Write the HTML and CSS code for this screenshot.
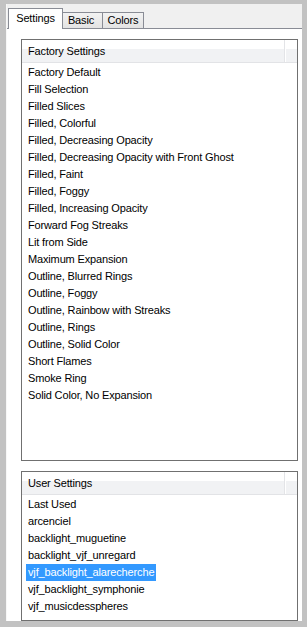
FILE: index.html
```html
<!DOCTYPE html>
<html lang="en">

<head>
    <meta charset="UTF-8">
    <title>Glow Settings</title>
    <link rel="stylesheet" href="styles.css">
</head>

<body>
    <div class="window">
        <!-- Tabs -->
        <div class="tabs">
            <div class="tab active">Settings</div>
            <div class="tab basic">Basic</div>
            <div class="tab colors">Colors</div>
        </div>

        <div class="panel">
            <!-- Factory presets -->
            <div class="listbox factory">
                <div class="list_head">
                    <span class="col">Factory Settings</span>
                    <span class="col_rest"></span>
                </div>
                <div class="rows">
                    <div class="row"><span>Factory Default</span></div>
                    <div class="row"><span>Fill Selection</span></div>
                    <div class="row"><span>Filled Slices</span></div>
                    <div class="row"><span>Filled, Colorful</span></div>
                    <div class="row"><span>Filled, Decreasing Opacity</span></div>
                    <div class="row"><span>Filled, Decreasing Opacity with Front Ghost</span></div>
                    <div class="row"><span>Filled, Faint</span></div>
                    <div class="row"><span>Filled, Foggy</span></div>
                    <div class="row"><span>Filled, Increasing Opacity</span></div>
                    <div class="row"><span>Forward Fog Streaks</span></div>
                    <div class="row"><span>Lit from Side</span></div>
                    <div class="row"><span>Maximum Expansion</span></div>
                    <div class="row"><span>Outline, Blurred Rings</span></div>
                    <div class="row"><span>Outline, Foggy</span></div>
                    <div class="row"><span>Outline, Rainbow with Streaks</span></div>
                    <div class="row"><span>Outline, Rings</span></div>
                    <div class="row"><span>Outline, Solid Color</span></div>
                    <div class="row"><span>Short Flames</span></div>
                    <div class="row"><span>Smoke Ring</span></div>
                    <div class="row"><span>Solid Color, No Expansion</span></div>
                </div>
            </div>

            <!-- User presets -->
            <div class="listbox user">
                <div class="list_head">
                    <span class="col">User Settings</span>
                    <span class="col_rest"></span>
                </div>
                <div class="rows">
                    <div class="row"><span>Last Used</span></div>
                    <div class="row"><span>arcenciel</span></div>
                    <div class="row"><span>backlight_muguetine</span></div>
                    <div class="row"><span>backlight_vjf_unregard</span></div>
                    <div class="row selected"><span>vjf_backlight_alarecherche</span></div>
                    <div class="row"><span>vjf_backlight_symphonie</span></div>
                    <div class="row"><span>vjf_musicdesspheres</span></div>
                </div>
            </div>
        </div>
    </div>
</body>

</html>
```

FILE: styles.css
```css
/* Global */
body {
    margin: 0;
    padding: 0;
    background: #c2c2c2;
    font-family: Tahoma, 'Liberation Sans', sans-serif;
    font-size: 11px;
    letter-spacing: -0.15px;
    color: #000;
}

.window {
    margin: 4px 5px 0 6px;
    height: 617px;
    background: #f0f0f0;
    border-left: 1px solid #f7f7f7;
    display: flex;
    flex-direction: column;
}

/* Tabs */
.tabs {
    height: 24px;
    display: flex;
    align-items: flex-end;
    padding-left: 1px;
}

.tab {
    height: 16px;
    line-height: 15px;
    text-align: center;
    box-sizing: border-box;
    border: 1px solid #898c95;
    border-bottom: none;
    background: linear-gradient(#f2f2f2, #e3e3e3);
    margin-right: -1px;
}

.tab.basic {
    width: 41px;
    padding-right: 3px;
}

.tab.colors {
    width: 42px;
}

.tab.active {
    width: 55px;
    height: 21px;
    line-height: 19px;
    background: #fff;
    margin-bottom: -1px;
    position: relative;
    z-index: 1;
}

.panel {
    flex: 1;
    background: #fff;
    border-top: 1px solid #898c95;
    padding: 10px 4px 0 14px;
    display: flex;
    flex-direction: column;
    gap: 10px;
}

/* List boxes */
.listbox {
    border: 1px solid #707070;
    background: #fff;
}

.factory {
    height: 420px;
}

.user {
    flex: 1;
    border-bottom: 1px solid #707070;
}

.list_head {
    height: 22px;
    display: flex;
    border-bottom: 1px solid #e2e3e6;
    background: linear-gradient(#fff 0%, #fff 40%, #f1f2f4 41%, #f1f2f4 100%);
}

.list_head .col {
    width: 256px;
    padding-left: 6px;
    line-height: 22px;
    border-right: 1px solid #e3e4e7;
}

.list_head .col_rest {
    flex: 1;
    border-left: 1px solid #fff;
}

.rows {
    padding-top: 1px;
}

.row {
    height: 17px;
    line-height: 17px;
    padding-left: 4px;
    white-space: nowrap;
}

.row span {
    display: inline-block;
    padding: 0 2px;
}

.row.selected span {
    background: #3399ff;
    color: #fff;
}
```
